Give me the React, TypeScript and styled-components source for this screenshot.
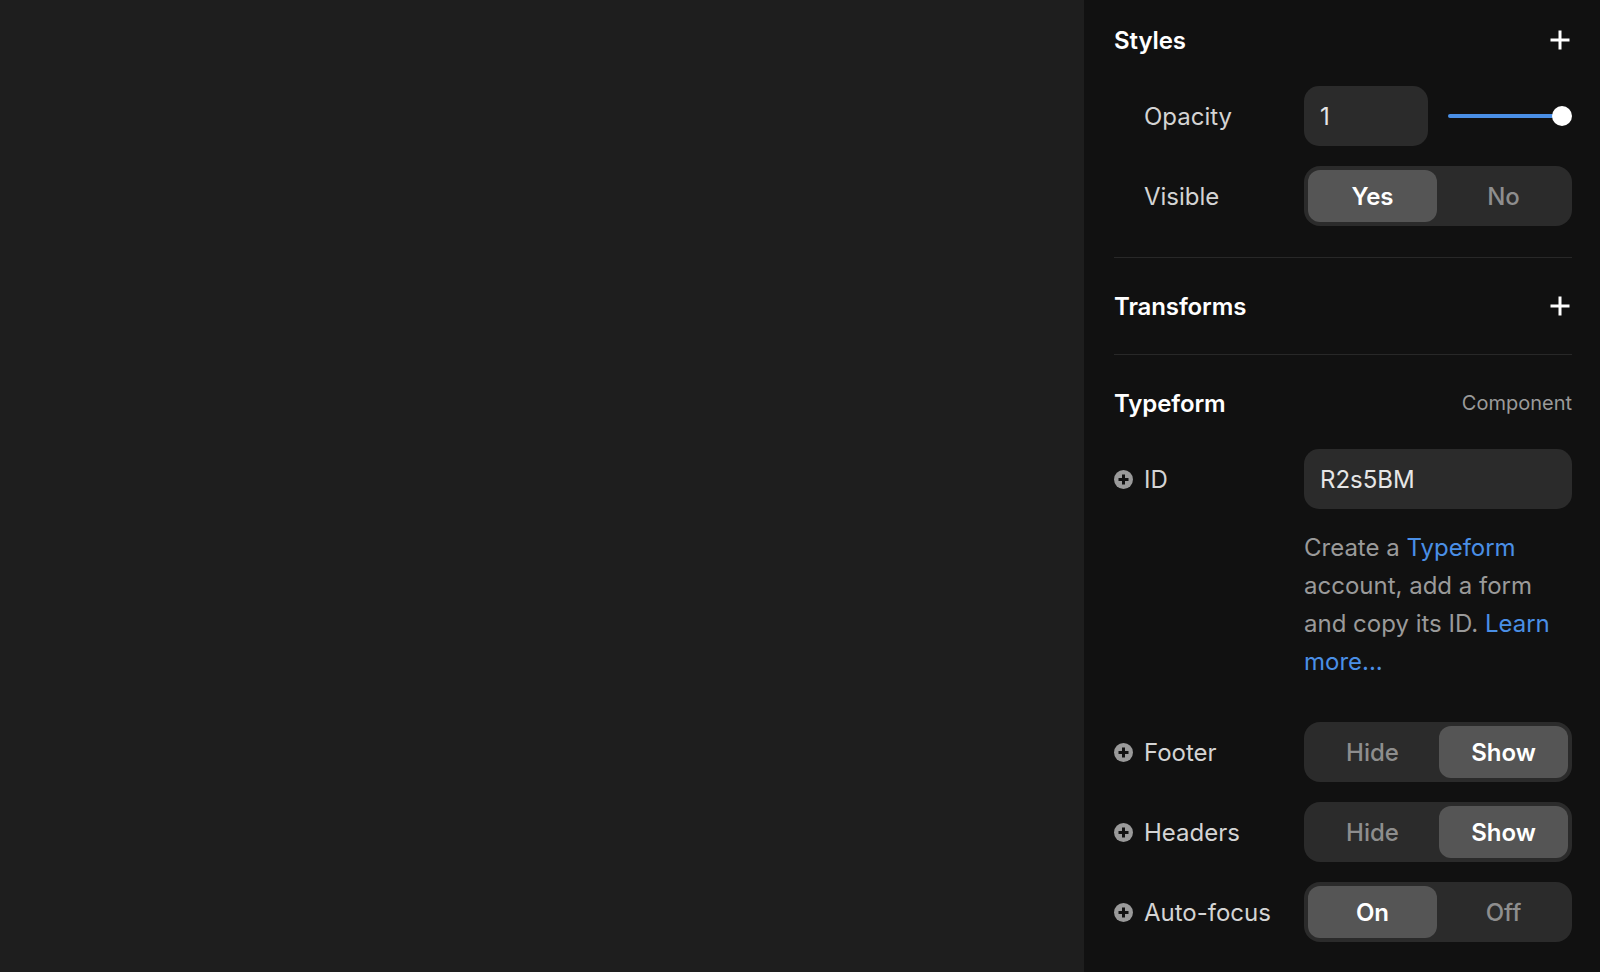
import React from 'react'
import styled, { createGlobalStyle } from 'styled-components'

const GlobalStyle = createGlobalStyle`
	html, body {
		margin: 0;
		padding: 0;
		background: #1e1e1e;
		font-family: Inter, "Noto Sans", sans-serif;
	}
	* {
		box-sizing: border-box;
	}
`

const Page = styled.div`
	display: flex;
	width: 100%;
	height: 100vh;
	overflow: hidden;
`

const Canvas = styled.div`
	flex: 1;
	background: #1e1e1e;
`

const Panel = styled.aside`
	width: 516px;
	flex-shrink: 0;
	background: #111111;
	padding: 18px 28px 0 30px;
	display: flex;
	flex-direction: column;
`

const Section = styled.section<{ $top?: number; $bottom?: number; $divider?: boolean }>`
	padding-top: ${(p) => p.$top ?? 26}px;
	padding-bottom: ${(p) => p.$bottom ?? 26}px;
	border-bottom: ${(p) => (p.$divider ? '1px solid #282828' : 'none')};
`

const Header = styled.div`
	height: 44px;
	display: flex;
	align-items: center;
	justify-content: space-between;
`

const Title = styled.h2`
	margin: 0;
	font-size: 24px;
	font-weight: 600;
	color: #ffffff;
	letter-spacing: -0.1px;
`

const HeaderNote = styled.span`
	font-size: 20px;
	color: #9a9a9a;
`

const AddButton = styled.button`
	width: 24px;
	height: 24px;
	padding: 0;
	border: 0;
	background: none;
	display: flex;
	align-items: center;
	justify-content: center;
	cursor: pointer;
`

const Rows = styled.div`
	margin-top: 24px;
	display: flex;
	flex-direction: column;
	gap: 20px;
`

const Row = styled.div`
	display: grid;
	grid-template-columns: 190px 1fr;
	align-items: start;
`

const LabelCell = styled.div`
	height: 60px;
	display: flex;
	align-items: center;
	gap: 11px;
	padding-left: ${(p: { $indent?: boolean }) => (p.$indent ? '30px' : '0')};
`

const Label = styled.span`
	font-size: 24px;
	color: #d4d4d4;
	white-space: nowrap;
`

const Controls = styled.div`
	display: flex;
	align-items: center;
	gap: 20px;
	height: 60px;
`

const ControlStack = styled.div`
	display: flex;
	flex-direction: column;
	gap: 20px;
	margin-bottom: 21px;
`

const TextInput = styled.div<{ $width?: number }>`
	height: 60px;
	width: ${(p) => (p.$width ? `${p.$width}px` : '100%')};
	flex-shrink: 0;
	background: #2b2b2b;
	border-radius: 15px;
	padding: 0 16px;
	display: flex;
	align-items: center;
	font-size: 24px;
	color: #e6e6e6;
`

const Slider = styled.div`
	position: relative;
	flex: 1;
	height: 20px;
`

const SliderFill = styled.div`
	position: absolute;
	left: 0;
	top: 8px;
	height: 4px;
	border-radius: 2px;
	background: #4a8fe6;
`

const SliderKnob = styled.div`
	position: absolute;
	top: 0;
	width: 20px;
	height: 20px;
	border-radius: 50%;
	background: #ffffff;
	transform: translateX(-50%);
`

const Segmented = styled.div`
	height: 60px;
	width: 100%;
	background: #2b2b2b;
	border-radius: 16px;
	padding: 4px;
	display: grid;
	grid-template-columns: 1fr 1fr;
	gap: 2px;
`

const Segment = styled.div<{ $active?: boolean }>`
	border-radius: 12px;
	background: ${(p) => (p.$active ? '#555555' : 'transparent')};
	color: ${(p) => (p.$active ? '#ffffff' : '#8e8e8e')};
	font-size: 24px;
	font-weight: ${(p) => (p.$active ? 600 : 500)};
	display: flex;
	align-items: center;
	justify-content: center;
`

const HelpText = styled.p`
	margin: 0;
	font-size: 24px;
	line-height: 38px;
	color: #9a9a9a;
`

const Link = styled.a`
	color: #4a8fe6;
	text-decoration: none;
`

const PlusIcon = () => (
	<svg width="24" height="24" viewBox="0 0 24 24">
		<path d="M12 2.5v19M2.5 12h19" stroke="#ffffff" strokeWidth="3" fill="none" />
	</svg>
)

const CirclePlus = () => (
	<svg width="19" height="19" viewBox="0 0 19 19">
		<circle cx="9.5" cy="9.5" r="9.5" fill="#9a9a9a" />
		<path d="M9.5 4.5v10M4.5 9.5h10" stroke="#111111" strokeWidth="3" fill="none" />
	</svg>
)

const Toggle = ({ options, active }: { options: [string, string]; active: number }) => (
	<Segmented>
		{options.map((o, i) => (
			<Segment key={o} $active={i === active}>
				{o}
			</Segment>
		))}
	</Segmented>
)

const opacity = 1

export default function App() {
	return (
		<>
			<GlobalStyle />
			<Page>
				<Canvas />
				<Panel>
					<Section $top={0} $bottom={31} $divider>
						<Header>
							<Title>Styles</Title>
							<AddButton>
								<PlusIcon />
							</AddButton>
						</Header>
						<Rows>
							<Row>
								<LabelCell $indent>
									<Label>Opacity</Label>
								</LabelCell>
								<Controls>
									<TextInput $width={124}>{opacity}</TextInput>
									<Slider>
										<SliderFill style={{ width: `calc(${opacity * 100}% - 10px)` }} />
										<SliderKnob style={{ left: `calc(${opacity * 100}% - 10px)` }} />
									</Slider>
								</Controls>
							</Row>
							<Row>
								<LabelCell $indent>
									<Label>Visible</Label>
								</LabelCell>
								<Toggle options={['Yes', 'No']} active={0} />
							</Row>
						</Rows>
					</Section>

					<Section $divider>
						<Header>
							<Title>Transforms</Title>
							<AddButton>
								<PlusIcon />
							</AddButton>
						</Header>
					</Section>

					<Section>
						<Header>
							<Title>Typeform</Title>
							<HeaderNote>Component</HeaderNote>
						</Header>
						<Rows>
							<Row>
								<LabelCell>
									<CirclePlus />
									<Label>ID</Label>
								</LabelCell>
								<ControlStack>
									<TextInput>R2s5BM</TextInput>
									<HelpText>
										Create a <Link href="#">Typeform</Link> account, add a form and copy its ID.{' '}
										<Link href="#">Learn more...</Link>
									</HelpText>
								</ControlStack>
							</Row>
							<Row>
								<LabelCell>
									<CirclePlus />
									<Label>Footer</Label>
								</LabelCell>
								<Toggle options={['Hide', 'Show']} active={1} />
							</Row>
							<Row>
								<LabelCell>
									<CirclePlus />
									<Label>Headers</Label>
								</LabelCell>
								<Toggle options={['Hide', 'Show']} active={1} />
							</Row>
							<Row>
								<LabelCell>
									<CirclePlus />
									<Label>Auto-focus</Label>
								</LabelCell>
								<Toggle options={['On', 'Off']} active={0} />
							</Row>
						</Rows>
					</Section>
				</Panel>
			</Page>
		</>
	)
}
